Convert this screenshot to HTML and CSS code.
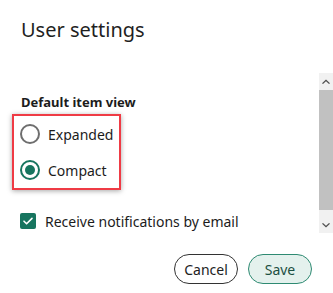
FILE: index.html
```html
<!doctype html>
<html lang="en">
 <head>
  <meta charset="UTF-8">
  <meta name="viewport" content="width=device-width, initial-scale=1.0">
  <title>User settings</title>
  <link rel="stylesheet" href="styles.css">
 </head>
 <body>
  <div class="dialog">
   <h1>User settings</h1>
   <div class="scroll">
    <div class="body">
     <div class="group-label">Default item view</div>
     <div class="radio-group">
      <label class="radio"><span class="radio-mark"></span>Expanded</label>
      <label class="radio checked"><span class="radio-mark"></span>Compact</label>
     </div>
     <label class="check">
      <span class="check-mark">
       <svg width="12" height="12" viewBox="0 0 12 12"><path d="M2 6.2l2.6 2.6L10 3.4" fill="none" stroke="#fff" stroke-width="1.6" stroke-linecap="round" stroke-linejoin="round"/></svg>
      </span>
      Receive notifications by email
     </label>
    </div>
    <div class="scrollbar">
     <div class="sb-btn">
      <svg width="8" height="5" viewBox="0 0 8 5"><path d="M0 4.2L4 0.4 8 4.2 7 5 4 2.2 1 5z" fill="#505050"/></svg>
     </div>
     <div class="sb-track"><div class="sb-thumb"></div></div>
     <div class="sb-btn">
      <svg width="8" height="5" viewBox="0 0 8 5"><path d="M0 0.8L4 4.6 8 0.8 7 0 4 2.8 1 0z" fill="#505050"/></svg>
     </div>
    </div>
   </div>
   <div class="actions">
    <button class="btn">Cancel</button>
    <button class="btn primary">Save</button>
   </div>
  </div>
 </body>
</html>
```

FILE: styles.css
```css
body {
    margin: 0;
    background: #fff;
    font-family: 'Noto Sans', sans-serif;
    color: #1c1c1c;
}

.dialog {
    display: flex;
    flex-direction: column;
}

h1 {
    font-size: 20px;
    font-weight: 400;
    line-height: 28px;
    margin: 16px 0 29px 21px;
    color: #1f1f1f;
}

.scroll {
    display: flex;
    height: 160px;
}

.body {
    flex: 1;
    overflow: hidden;
    padding: 21px 0 0 21px;
}

.scrollbar {
    width: 14px;
    display: flex;
    flex-direction: column;
    background: #f1f1f1;
}

.sb-btn {
    height: 16px;
    display: flex;
    align-items: center;
    justify-content: center;
}

.sb-track {
    flex: 1;
    padding: 1px 0 7px;
}

.sb-thumb {
    height: 120px;
    background: #c1c1c1;
}

.group-label {
    font-size: 13px;
    font-weight: 700;
    line-height: 16px;
}

.radio-group {
    margin: 4px 0 0 -9px;
    width: 99px;
    border: 2px solid #ef3b45;
    box-shadow: 0 1px 5px rgba(0,0,0,0.35);
    padding-left: 6px;
}

.radio {
    display: flex;
    align-items: center;
    gap: 8px;
    height: 36px;
    font-size: 14px;
}

.radio-mark {
    width: 20px;
    height: 20px;
    box-sizing: border-box;
    border: 2px solid #6e6e6e;
    border-radius: 50%;
    display: flex;
    align-items: center;
    justify-content: center;
}

.radio.checked .radio-mark {
    border-color: #17755f;
}

.radio.checked .radio-mark::after {
    content: '';
    width: 10px;
    height: 10px;
    border-radius: 50%;
    background: #17755f;
}

.check {
    display: flex;
    align-items: center;
    gap: 9px;
    height: 32px;
    margin: 15px 0 6px -1px;
    font-size: 14px;
}

.check-mark {
    width: 16px;
    height: 16px;
    border-radius: 2px;
    background: #17755f;
    display: flex;
    align-items: center;
    justify-content: center;
}

.actions {
    display: flex;
    justify-content: flex-end;
    gap: 10px;
    padding: 21px 21px 0 0;
}

.btn {
    width: 64px;
    height: 30px;
    border-radius: 15px;
    border: 1px solid #333;
    background: #fff;
    font-family: 'Noto Sans', sans-serif;
    font-size: 14px;
    color: #222;
    padding: 0;
}

.btn.primary {
    background: #e4f1ed;
    border-color: #2e8a72;
    color: #1c4f42;
}
```
